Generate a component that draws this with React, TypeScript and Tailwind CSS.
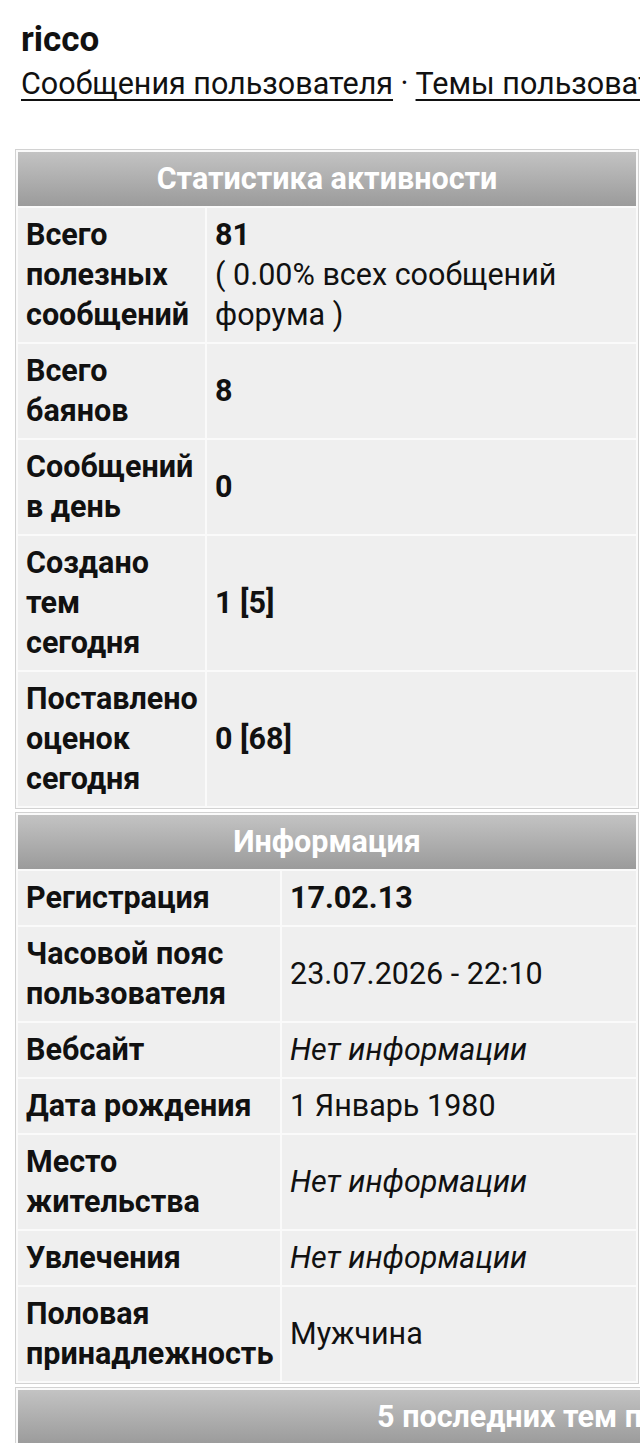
import React from 'react';

type Row = {
  label: React.ReactNode;
  value: React.ReactNode;
};

const activityRows: Row[] = [
  {
    label: (
      <>
        Всего
        <br />
        полезных
        <br />
        сообщений
      </>
    ),
    value: (
      <>
        <b>81</b>
        <br />( 0.00% всех сообщений
        <br />
        форума )
      </>
    ),
  },
  {
    label: (
      <>
        Всего
        <br />
        баянов
      </>
    ),
    value: <b>8</b>,
  },
  {
    label: (
      <>
        Сообщений
        <br />в день
      </>
    ),
    value: <b>0</b>,
  },
  {
    label: (
      <>
        Создано
        <br />
        тем
        <br />
        сегодня
      </>
    ),
    value: <b>1 [5]</b>,
  },
  {
    label: (
      <>
        Поставлено
        <br />
        оценок
        <br />
        сегодня
      </>
    ),
    value: <b>0 [68]</b>,
  },
];

const infoRows: Row[] = [
  { label: 'Регистрация', value: <b>17.02.13</b> },
  {
    label: (
      <>
        Часовой пояс
        <br />
        пользователя
      </>
    ),
    value: '23.07.2026 - 22:10',
  },
  { label: 'Вебсайт', value: <i>Нет информации</i> },
  { label: 'Дата рождения', value: '1 Январь 1980' },
  {
    label: (
      <>
        Место
        <br />
        жительства
      </>
    ),
    value: <i>Нет информации</i>,
  },
  { label: 'Увлечения', value: <i>Нет информации</i> },
  {
    label: (
      <>
        Половая
        <br />
        принадлежность
      </>
    ),
    value: 'Мужчина',
  },
];

function SectionHeader({ title }: { title: string }) {
  return (
    <tr>
      <th
        colSpan={2}
        className="bg-linear-to-b from-[#c3c3c3] to-[#9b9b9b] py-[7px] text-center text-[30.5px] leading-[40px] font-bold text-white"
      >
        {title}
      </th>
    </tr>
  );
}

function InfoTable({
  title,
  rows,
  labelWidth,
}: {
  title: string;
  rows: Row[];
  labelWidth: string;
}) {
  return (
    <table className="ml-[15px] w-[624px] table-fixed border-separate border-spacing-[2px] border border-[#d2d2d2] bg-[#fafafa]">
      <colgroup>
        <col className={labelWidth} />
        <col />
      </colgroup>
      <thead>
        <SectionHeader title={title} />
      </thead>
      <tbody>
        {rows.map((row, i) => (
          <tr key={i}>
            <td className="bg-[#efefef] px-[8px] py-[7px] align-middle text-[30.5px] leading-[40px] font-bold whitespace-nowrap">
              {row.label}
            </td>
            <td className="bg-[#efefef] px-[8px] py-[7px] align-middle text-[30.5px] leading-[40px] whitespace-nowrap">
              {row.value}
            </td>
          </tr>
        ))}
      </tbody>
    </table>
  );
}

export default function App() {
  return (
    <div className="min-h-[1443px] w-[640px] overflow-hidden bg-white font-['Roboto','Noto_Sans',sans-serif] text-[#111]">
      {/* breadcrumb row, scrolled mostly off screen */}
      <div className="h-[3px] overflow-hidden">
        <div className="-mt-[31px] flex items-center gap-[18px] pl-[38px] text-[24px] leading-[34px] whitespace-nowrap">
          <span className="text-[#2a7ab8] underline decoration-[#3a8fd0] decoration-2 underline-offset-[2px]">
            Главная
          </span>
          <span className="text-[#2a7ab8] underline decoration-[#3a8fd0] decoration-2 underline-offset-[2px]">
            Форум
          </span>
          <span>» Профиль</span>
        </div>
      </div>

      <h1 className="mt-[17px] pl-[21px] text-[35px] leading-[40px] font-bold">ricco</h1>

      <div className="mt-[4px] pl-[21px] text-[30.5px] leading-[40px] whitespace-nowrap">
        <span className="underline decoration-[1.5px] underline-offset-[5px]">Сообщения пользователя</span>
        <span> · </span>
        <span className="underline decoration-[1.5px] underline-offset-[5px]">Темы пользователя</span>
      </div>

      <div className="mt-[45px] flex flex-col gap-[3px]">
        <InfoTable title="Статистика активности" rows={activityRows} labelWidth="w-[187px]" />
        <InfoTable title="Информация" rows={infoRows} labelWidth="w-[262px]" />
        <table className="ml-[15px] w-[1172px] min-w-[1172px] border-separate border-spacing-[2px] border border-[#d2d2d2] bg-[#fafafa]">
          <thead>
            <SectionHeader title="5 последних тем пользователя" />
          </thead>
        </table>
      </div>
    </div>
  );
}
